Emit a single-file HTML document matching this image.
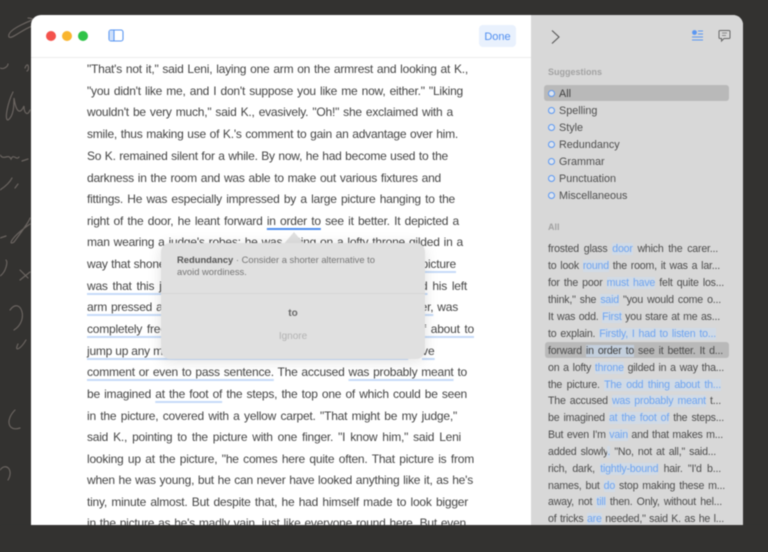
<!DOCTYPE html>
<html><head><meta charset="utf-8"><style>
html,body{margin:0;padding:0;width:768px;height:552px;overflow:hidden;background:#333230;font-family:"Liberation Sans",sans-serif}
#wrap{position:relative;width:768px;height:552px;overflow:hidden;filter:blur(.45px)}
#win{position:absolute;left:31px;top:15px;width:712px;height:510px;background:#fff;border-radius:10px 10px 0 0;overflow:hidden}
.a{position:absolute}
.l{position:absolute;left:87px;height:16px;line-height:16px;font-size:12px;letter-spacing:-.22px;color:#444;text-align:justify;text-align-last:justify;overflow:visible}
.u{text-decoration:underline;text-decoration-color:#c6dbf8;text-decoration-thickness:1.5px;text-underline-offset:3px}
.s{position:absolute;left:548px;height:14px;line-height:14px;font-size:10.6px;letter-spacing:-.2px;color:#4c4c4c;text-align:justify;text-align-last:justify}
.s b{font-weight:normal;color:#6ea4f0;background:#d0dae6}
.r{position:absolute;left:559px;font-size:10.8px;line-height:14px;height:14px;color:#4e4e4e}
.c{position:absolute;left:548px;width:5px;height:5px;border:1.6px solid #5a97f2;border-radius:50%;background:#dfe5ee}
</style></head><body><div id="wrap">
<svg class="a" style="left:0;top:0" width="768" height="552" fill="none" stroke="#6b6561" stroke-width="1.2" stroke-linecap="round">
<path d="M45 16C30 20 6 30 9 37C12 40 25 26 40 24C48 23 30 18 28 18"/>
<path d="M0 68C4 70 8 66 8 64M25 68C28 60 30 70 27 71"/>
<path d="M13 92C8 102 4 120 8 120C14 116 14 104 14 98C16 112 20 115 24 106C24 114 28 116 30 110"/>
<path d="M0 155C4 161 8 153 11 159C14 153 16 161 19 157M22 161L28 159"/>
<path d="M0 190C6 186 10 182 12 178M15 188L18 184"/>
<path d="M30 224C10 238 8 246 14 242C20 234 30 220 30 218M0 238L6 236"/>
<path d="M0 276C6 272 8 262 6 260M20 270L28 278M30 272L20 280"/>
<path d="M10 310C20 296 30 320 14 330M26 340C20 350 14 352 18 344"/>
<path d="M15 410C5 420 8 432 20 428M0 470C6 462 14 470 8 480"/>
</svg>
<div id="win"></div>
<div class="a" style="left:31px;top:57px;width:500px;height:1px;background:#ececec"></div>
<div class="a" style="left:531px;top:15px;width:212px;height:510px;background:#d8d8d8;border-radius:0 10px 0 0"></div>
<div class="a" style="left:46px;top:31px;width:10px;height:10px;border-radius:50%;background:#f4524c"></div>
<div class="a" style="left:62px;top:31px;width:10px;height:10px;border-radius:50%;background:#f9b52e"></div>
<div class="a" style="left:78px;top:31px;width:10px;height:10px;border-radius:50%;background:#2fc348"></div>
<svg class="a" style="left:108px;top:28px" width="17" height="15" fill="none" stroke="#5a97f2" stroke-width="1.1"><rect x="1" y="2" width="14" height="11" rx="2"/><rect x="1.6" y="2.6" width="4" height="9.8" fill="#cfe0fb" stroke="none"/><path d="M6 2V13"/></svg>
<div class="a" style="left:479px;top:25px;width:37px;height:22px;border-radius:4px;background:#e9f1fd;color:#4e8df0;font-size:11px;line-height:24px;text-align:center">Done</div>
<div id="text">
<div class="l" style="top:61px;width:381px">"That's not it," said Leni, laying one arm on the armrest and looking at K.,</div>
<div class="l" style="top:83px;width:376px">"you didn't like me, and I don't suppose you like me now, either." "Liking</div>
<div class="l" style="top:104px;width:366px">wouldn't be very much," said K., evasively. "Oh!" she exclaimed with a</div>
<div class="l" style="top:126px;width:371px">smile, thus making use of K.'s comment to gain an advantage over him.</div>
<div class="l" style="top:148px;width:361px">So K. remained silent for a while. By now, he had become used to the</div>
<div class="l" style="top:170px;width:354px">darkness in the room and was able to make out various fixtures and</div>
<div class="l" style="top:191px;width:368px">fittings. He was especially impressed by a large picture hanging to the</div>
<div class="l" style="top:213px;width:372px">right of the door, he leant forward <span style="text-decoration:underline;text-decoration-color:#4f8ef0;text-decoration-thickness:1.5px;text-underline-offset:3px">in order to</span> see it better. It depicted a</div>
<div class="l" style="top:234px;width:376px">man wearing a judge's robes; he was sitting on a lofty throne gilded in a</div>
<div class="l" style="top:256px;width:369px">way that shone forth above all else in it. <span class="u">The odd thing about this picture</span></div>
<div class="l" style="top:278px;width:380px"><span class="u">was that this judge did not seem to be sitting in dignity, but had</span> his left</div>
<div class="l" style="top:299px;width:371px"><span class="u">arm pressed against the back and armrest, his right arm, however,</span> was</div>
<div class="l" style="top:321px;width:387px"><span class="u">completely free, only his hand was gripping at the armrest, as if about to</span></div>
<div class="l" style="top:343px;width:330px;text-align-last:left;white-space:nowrap"><span class="u">jump up any moment with a violent outburst and perhaps make</span></div>
<div class="a" style="left:422px;top:343px;height:16px;line-height:16px;font-size:12px;color:#444"><span class="u">ve</span></div>
<div class="l" style="top:364px;width:380px"><span class="u">comment or even to pass sentence.</span> The accused <span class="u">was probably meant</span> to</div>
<div class="l" style="top:386px;width:380px">be imagined <span class="u">at the foot of</span> the steps, the top one of which could be seen</div>
<div class="l" style="top:408px;width:370px">in the picture, covered with a yellow carpet. "That might be my judge,"</div>
<div class="l" style="top:429px;width:374px">said K., pointing to the picture with one finger. "I know him," said Leni</div>
<div class="l" style="top:451px;width:387px">looking up at the picture, "he comes here quite often. That picture is from</div>
<div class="l" style="top:472px;width:386px">when he was young, but he can never have looked anything like it, as he's</div>
<div class="l" style="top:494px;width:381px">tiny, minute almost. But despite that, he had himself made to look bigger</div>
<div class="l" style="top:515px;width:379px">in the picture as he's madly vain, just like everyone round here. But even</div>
</div>
<svg class="a" style="left:283px;top:231px" width="22" height="14"><path d="M0 14L11 1L22 14Z" fill="#e0e0e0"/></svg>
<div class="a" style="left:161px;top:243px;width:264px;height:116px;background:#e0e0e0;border-radius:9px;box-shadow:0 2px 14px rgba(0,0,0,.12)"></div>
<div class="a" style="left:177px;top:254px;width:235px;font-size:9.4px;line-height:12px;color:#757575"><b style="color:#555">Redundancy</b> · Consider a shorter alternative to<br>avoid wordiness.</div>
<div class="a" style="left:161px;top:293px;width:264px;height:1px;background:#d6d6d6"></div>
<div class="a" style="left:161px;top:308px;width:264px;text-align:center;font-size:10px;line-height:12px;color:#555;font-weight:bold;opacity:.85">to</div>
<div class="a" style="left:161px;top:331px;width:264px;text-align:center;font-size:10px;line-height:12px;color:#b2b2b2">Ignore</div>
<div class="a" style="left:0;top:525px;width:768px;height:27px;background:#333230"></div>
<svg class="a" style="left:550px;top:29px" width="12" height="16" fill="none" stroke="#555" stroke-width="1.1"><path d="M2 1.5L9 8L2 14.5"/></svg>
<svg class="a" style="left:691px;top:29px" width="13" height="13" fill="none" stroke="#5a97f2" stroke-width="1.1"><circle cx="3.5" cy="3.5" r="2.4" fill="#5a97f2" stroke="none"/><path d="M7 2H12M7 5H12M1 8H12M1 11H12"/></svg>
<svg class="a" style="left:718px;top:29px" width="13" height="14" fill="none" stroke="#666" stroke-width="1"><path d="M2 1.5H11Q12 1.5 12 2.5V8.5Q12 9.5 11 9.5H6L3.5 12V9.5H2Q1 9.5 1 8.5V2.5Q1 1.5 2 1.5Z"/><path d="M4 4H9M4 6.5H8" stroke="#888"/></svg>
<div class="a" style="left:548px;top:66px;font-size:9px;line-height:12px;font-weight:bold;color:#a2a2a2">Suggestions</div>
<div class="a" style="left:544px;top:85px;width:185px;height:16px;border-radius:3px;background:#b9b9b9"></div>
<div class="c" style="top:90px"></div><div class="r" style="top:87px;color:#3f3f3f">All</div>
<div class="c" style="top:107px"></div><div class="r" style="top:104px">Spelling</div>
<div class="c" style="top:124px"></div><div class="r" style="top:121px">Style</div>
<div class="c" style="top:141px"></div><div class="r" style="top:138px">Redundancy</div>
<div class="c" style="top:158px"></div><div class="r" style="top:155px">Grammar</div>
<div class="c" style="top:175px"></div><div class="r" style="top:172px">Punctuation</div>
<div class="c" style="top:192px"></div><div class="r" style="top:189px">Miscellaneous</div>
<div class="a" style="left:548px;top:221px;font-size:9px;line-height:12px;font-weight:bold;color:#a2a2a2">All</div>
<div class="a" style="left:545px;top:342px;width:184px;height:16px;border-radius:3px;background:#b9b9b9"></div>
<div class="s" style="top:242px;width:170px">frosted glass <b>door</b> which the carer...</div>
<div class="s" style="top:259px;width:172px">to look <b>round</b> the room, it was a lar...</div>
<div class="s" style="top:276px;width:176px">for the poor <b>must have</b> felt quite los...</div>
<div class="s" style="top:293px;width:173px">think," she <b>said</b> "you would come o...</div>
<div class="s" style="top:310px;width:172px">It was odd. <b>First</b> you stare at me as...</div>
<div class="s" style="top:327px;width:168px">to explain. <b>Firstly, I had to listen to...</b></div>
<div class="s" style="top:344px;width:175px">forward <b style="color:#3f3f3f;background:#c3cfdd">in order to</b> see it better. It d...</div>
<div class="s" style="top:361px;width:176px">on a lofty <b>throne</b> gilded in a way tha...</div>
<div class="s" style="top:378px;width:173px">the picture. <b>The odd thing about th...</b></div>
<div class="s" style="top:394px;width:173px">The accused <b>was probably meant</b> t...</div>
<div class="s" style="top:411px;width:176px">be imagined <b>at the foot of</b> the steps...</div>
<div class="s" style="top:428px;width:175px">But even I'm <b>vain</b> and that makes m...</div>
<div class="s" style="top:445px;width:168px">added slowly<b>.</b> "No, not at all," said...</div>
<div class="s" style="top:462px;width:173px">rich, dark, <b>tightly-bound</b> hair. "I'd b...</div>
<div class="s" style="top:479px;width:177px">names, but <b>do</b> stop making these m...</div>
<div class="s" style="top:495px;width:174px">away, not <b>till</b> then. Only, without hel...</div>
<div class="s" style="top:512px;width:176px;height:13px;overflow:hidden">of tricks <b>are</b> needed," said K. as he l...</div>
</div></body></html>
